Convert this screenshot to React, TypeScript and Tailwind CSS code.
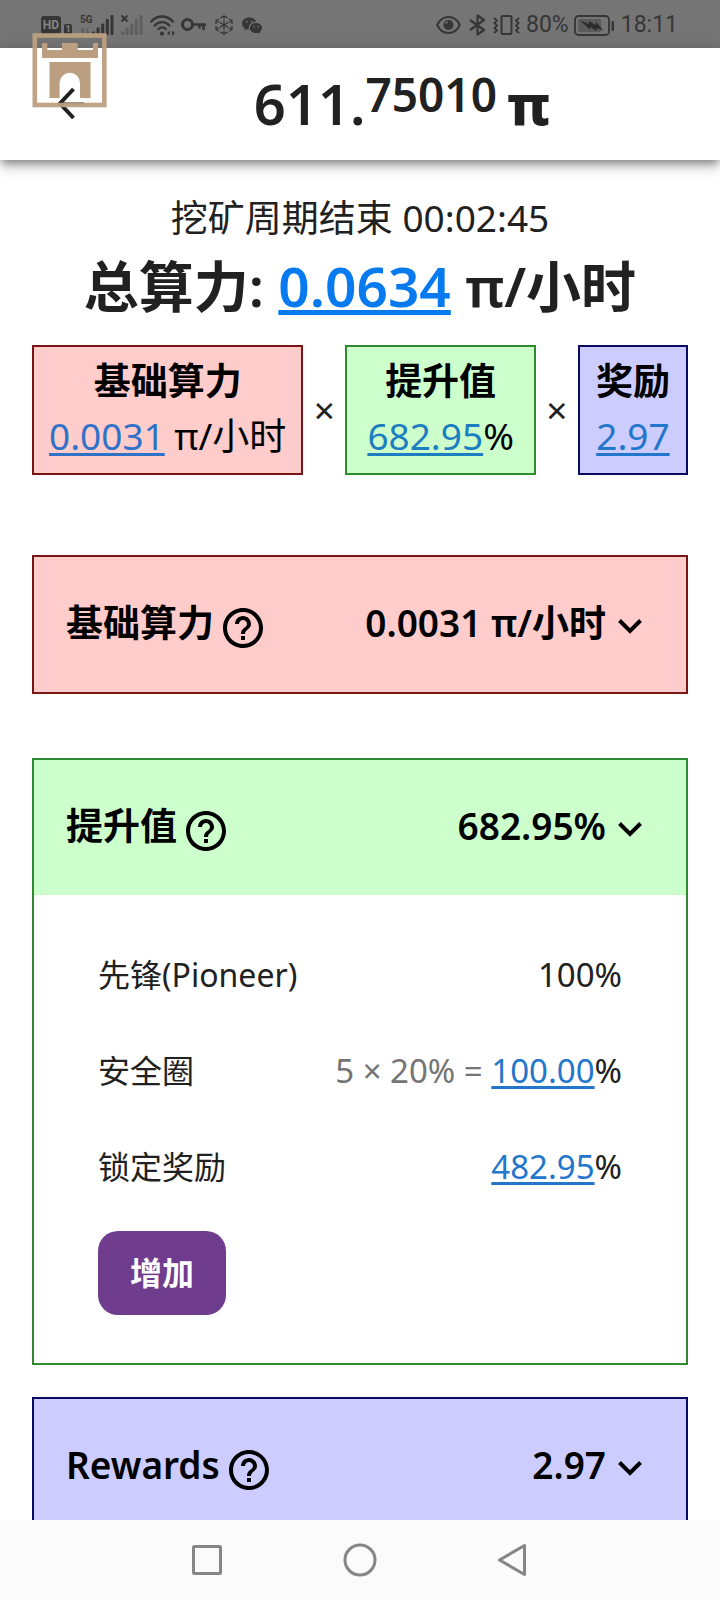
import { ReactNode, useState } from "react";
import { BsWechat } from "react-icons/bs";
import { MdHelpOutline } from "react-icons/md";

const ValueLink = ({ children, className = "text-[#2276cc] decoration-[3px]" }: { children: ReactNode; className?: string }) => (
  <a href="#detail" className={`underline underline-offset-[3px] ${className}`}>
    {children}
  </a>
);

const SignalBars = ({ className }: { className: string }) => (
  <svg className={className} viewBox="0 0 22 20" fill="currentColor" aria-hidden="true">
    <rect x="0" y="16.5" width="3" height="3.5" rx="1" />
    <rect x="4.6" y="12.5" width="3" height="7.5" rx="1" />
    <rect x="9.2" y="8.5" width="3" height="11.5" rx="1" />
    <rect x="13.8" y="4" width="3" height="16" rx="1" />
    <rect x="18.5" y="0" width="3" height="20" rx="1" />
  </svg>
);

const StatusBar = () => (
  <div className="flex h-12 shrink-0 items-center justify-between bg-[#757575] pt-0.5 pr-[42px] pl-[41px] font-['Roboto','Noto_Sans_CJK_SC',sans-serif] text-[#363636]">
    <div className="flex items-center">
      <span className="flex h-[18px] w-5 items-center justify-center rounded-[3px] bg-[#363636] text-[12px] font-bold text-[#858585]">
        HD
      </span>
      <span className="ml-[3px] flex h-3 w-2 items-center justify-center self-end rounded-[2px] bg-[#363636] text-[9px] font-bold text-[#858585]">
        1
      </span>
      <span className="ml-2 flex h-5 w-3 flex-col text-[10px] leading-[10px] font-bold">
        5G
        <svg className="mt-[3px] h-[7px] w-[10px] text-[#5c5c5c]" viewBox="0 0 10 7" stroke="currentColor" fill="none" aria-hidden="true">
          <path d="M1 3l2-2v6M9 4L7 6V0" strokeWidth="1.4" />
        </svg>
      </span>
      <SignalBars className="h-5 w-[22px]" />
      <span className="relative ml-[7px] block h-5 w-[22px]">
        <SignalBars className="h-5 w-[22px] text-[#5f5f5f]" />
        <svg className="absolute top-0 left-0 h-[7px] w-[7px]" viewBox="0 0 7 7" aria-hidden="true">
          <path d="M.5.5l6 6M6.5.5l-6 6" stroke="currentColor" strokeWidth="2" />
        </svg>
      </span>
      <svg className="ml-[7px] h-[21px] w-[25px]" viewBox="0 0 25 21" fill="none" stroke="currentColor" strokeWidth="2.4" strokeLinecap="round" aria-hidden="true">
        <path d="M1.3 6.5c6-6.7 15.500-6.7 21.500 0M4.8 10.5c4-4.5 10.500-4.5 14.500 0M8.5 14c2-2.2 5.200-2.200 7.200 0" />
        <circle cx="12" cy="18.6" r="2.1" fill="currentColor" stroke="none" />
        <path d="M17 18.500l3-3v5zM25 18l-3 3v-5.500z" fill="currentColor" stroke="none" />
      </svg>
      <svg className="ml-[6px] h-[14px] w-[26px]" viewBox="0 0 26 14" fill="none" stroke="currentColor" strokeWidth="3" aria-hidden="true">
        <circle cx="6.5" cy="6.5" r="5" />
        <path d="M11.5 6.5H25M22.5 6.5V12M18.5 6.5v4" strokeWidth="2.6" />
      </svg>
      <svg className="ml-[8px] h-5 w-[18px]" viewBox="0 0 18 20" fill="none" stroke="currentColor" strokeWidth="1.3" aria-hidden="true">
        <path d="M9 5v10M4.700 7.500l8.600 5M13.300 7.500l-8.600 5" />
        <path d="M5.500 2.800L9 1l3.500 1.800M9 1v3M5.500 17.200L9 19l3.500-1.800M9 19v-3M1 9V5.500L4 3.700M1 5.500l3 1.700M17 9V5.500l-3-1.800M17 5.500l-3 1.700M1 11v3.500l3 1.800M1 14.500l3-1.700M17 11v3.500l-3 1.800M17 14.500l-3-1.700" />
      </svg>
      <BsWechat className="ml-[9px] h-5 w-5" />
    </div>
    <div className="flex items-center text-[23px]">
      <svg className="h-5 w-[25px]" viewBox="0 0 25 20" fill="none" stroke="currentColor" strokeWidth="2" aria-hidden="true">
        <path d="M1.2 10C3.5 5 7.5 2 12.5 2s9 3 11.300 8c-2.300 5-6.300 8-11.300 8s-9-3-11.300-8z" />
        <circle cx="12.5" cy="10" r="5" fill="currentColor" stroke="none" />
        <path d="M9.5 8.8a3 3 0 0 1 2.500-2" stroke="#757575" strokeWidth="1.2" />
      </svg>
      <svg className="ml-2 h-[22px] w-[17px]" viewBox="0 0 17 22" fill="none" stroke="currentColor" strokeWidth="2.2" aria-hidden="true">
        <path d="M1 6l14 10-6.500 4.500v-19L15 6 1 16" strokeLinejoin="round" />
      </svg>
      <svg className="ml-[7px] h-5 w-[27px]" viewBox="0 0 27 20" fill="none" stroke="currentColor" strokeWidth="2" aria-hidden="true">
        <rect x="8.5" y="1" width="10" height="18" rx="1.5" />
        <path d="M1 3l3 2.500L1.500 8 4 10.500 1.500 13 4 15.500 1 18M26 3l-3 2.500L25.500 8 23 10.500l2.500 2.500-2.500 2.500 3 2.500" strokeWidth="1.8" />
      </svg>
      <span className="ml-[6px]">80%</span>
      <svg className="ml-[5px] h-[21px] w-[41px]" viewBox="0 0 41 21" fill="none" aria-hidden="true">
        <rect x="1" y="1" width="34" height="19" rx="3.5" stroke="currentColor" strokeWidth="1.8" />
        <rect x="4" y="4" width="23" height="13" rx="1.5" fill="#5b5b5b" />
        <path d="M6 5.500l9 3.500V6l6.500 4 .5-3 7.500 8.500-6.500-2.500-.5 3-6-4-.5 2.500z" fill="#2c2c2c" />
        <rect x="37.5" y="6" width="2.5" height="10" rx="1" fill="currentColor" />
      </svg>
      <span className="ml-[6px]">18:11</span>
    </div>
  </div>
);

const FloatingGate = () => (
  <svg className="absolute top-[33px] left-8 z-20 h-[75px] w-[75px]" viewBox="0 0 75 75" fill="#bc9f80" aria-hidden="true">
    <rect x="2.8" y="2.5" width="69.5" height="69.5" fill="none" stroke="#bc9f80" strokeWidth="4.6" strokeOpacity=".95" />
    <path d="M10 10h5.300v7H30v-7h15.700v7H61v-7h5v15H10z" />
    <path d="M17.500 29h41v36H48V50a10.200 10.200 0 0 0-20.400 0v15H17.500z" />
  </svg>
);

const Header = () => (
  <header className="relative z-10 flex h-28 shrink-0 items-center bg-white pl-9 shadow-[0_4px_8px_-2px_rgba(0,0,0,0.4),0_8px_10px_0_rgba(0,0,0,0.14),0_2px_20px_0_rgba(0,0,0,0.12)]">
    <button type="button" aria-label="返回" className="h-12 w-12">
      <svg className="h-12 w-12" viewBox="0 0 48 48" fill="none" stroke="currentColor" aria-hidden="true">
        <path d="M37.5 9L24 23.500 37.500 38" strokeWidth="4" />
        <path d="M24 23.500h24" strokeWidth="2" />
      </svg>
    </button>
    <h1 className="flex flex-1 items-baseline justify-center pb-0.5 text-[56px] leading-[72px] font-semibold">
      611.
      <sup className="-top-[13px] text-[46px] leading-none">75010</sup>
      <span className="ml-2.5 font-extrabold">π</span>
    </h1>
  </header>
);

interface FactorBoxProps {
  title: string;
  className: string;
  children: ReactNode;
}

const FactorBox = ({ title, className, children }: FactorBoxProps) => (
  <div className={`border-2 pt-1.5 pb-2.5 text-center text-[37px] leading-[55px] whitespace-nowrap text-black ${className}`}>
    <h3 className="font-semibold">{title}</h3>
    <p>{children}</p>
  </div>
);

interface RateCardProps {
  title: string;
  value: string;
  borderClass: string;
  headClass: string;
  children?: ReactNode;
}

const RateCard = ({ title, value, borderClass, headClass, children }: RateCardProps) => {
  const [open, setOpen] = useState(true);

  return (
    <section className={`border-2 ${borderClass}`}>
      <div className={`flex justify-between px-8 pt-9 pb-10 text-[37px] leading-[59px] font-semibold text-black ${headClass}`}>
        <div className="flex gap-[5px]">
          <h3>{title}</h3>
          <button type="button" aria-label={`${title} 说明`} className="self-end">
            <MdHelpOutline className="h-12 w-12" />
          </button>
        </div>
        <button type="button" aria-expanded={open} onClick={() => setOpen(!open)} className="flex items-center">
          {value}
          <svg className="h-12 w-12" viewBox="0 0 48 48" fill="none" stroke="currentColor" strokeWidth="4" aria-hidden="true">
            <path d="M13.5 21.500L24 32 34.500 21.500" />
          </svg>
        </button>
      </div>
      {open && children}
    </section>
  );
};

const DetailRow = ({ label, children }: { label: string; children: ReactNode }) => (
  <div className="flex justify-between py-6 text-[32px] leading-[48px]">
    <dt>{label}</dt>
    <dd className="text-[33px]">{children}</dd>
  </div>
);

const NavBar = () => (
  <nav className="flex h-20 shrink-0 items-center justify-center gap-[121px] bg-[#fbfbfb] text-[#868686]">
    <button type="button" aria-label="最近任务">
      <svg className="h-[30px] w-[30px]" viewBox="0 0 30 30" fill="none" stroke="currentColor" strokeWidth="3" aria-hidden="true">
        <rect x="1.5" y="1.5" width="27" height="27" rx="1" />
      </svg>
    </button>
    <button type="button" aria-label="主屏幕">
      <svg className="h-[34px] w-[34px]" viewBox="0 0 34 34" fill="none" stroke="currentColor" strokeWidth="3" aria-hidden="true">
        <circle cx="17" cy="17" r="15" />
      </svg>
    </button>
    <button type="button" aria-label="返回上一页">
      <svg className="h-[34px] w-[30px]" viewBox="0 0 30 34" fill="none" stroke="currentColor" strokeWidth="3" strokeLinejoin="round" aria-hidden="true">
        <path d="M26.500 2.500v29L1.500 17z" />
      </svg>
    </button>
  </nav>
);

const App = () => {
  return (
    <div className="relative flex h-screen flex-col overflow-hidden bg-white font-['Noto_Sans','Noto_Sans_CJK_SC',sans-serif] text-[#212121]">
      <StatusBar />
      <FloatingGate />
      <Header />

      <main className="min-h-0 flex-1 overflow-hidden px-8 pt-[34px]">
        <p className="text-center text-[37px] leading-[48px]">挖矿周期结束 00:02:45</p>
        <h2 className="mt-2 text-center text-[55px] leading-[72px] font-semibold">
          总算力: <ValueLink className="text-[#087af0] decoration-[5px]">0.0634</ValueLink> π/小时
        </h2>

        <div className="mt-[23px] flex items-center justify-between text-[37px]">
          <FactorBox title="基础算力" className="border-[#7a1515] bg-[#ffcccc] px-[15px]">
            <ValueLink className="text-[#2f72c8] decoration-[3px]">0.0031</ValueLink> π/小时
          </FactorBox>
          <span>×</span>
          <FactorBox title="提升值" className="border-[#2e8b2e] bg-[#ccffcc] px-5">
            <ValueLink className="text-[#1c7dc0] decoration-[3px]">682.95</ValueLink>%
          </FactorBox>
          <span>×</span>
          <FactorBox title="奖励" className="border-[#0a0a60] bg-[#ccccff] px-4">
            <ValueLink>2.97</ValueLink>
          </FactorBox>
        </div>

        <div className="mt-20">
          <RateCard title="基础算力" value="0.0031 π/小时" borderClass="border-[#7a1515]" headClass="bg-[#ffcccc]" />
        </div>

        <div className="mt-16">
          <RateCard title="提升值" value="682.95%" borderClass="border-[#2e8b2e]" headClass="bg-[#ccffcc]">
            <div className="px-16 pt-8 pb-12">
              <dl>
                <DetailRow label="先锋(Pioneer)">100%</DetailRow>
                <DetailRow label="安全圈">
                  <span className="text-[#757575]">5 × 20% = </span>
                  <ValueLink>100.00</ValueLink>%
                </DetailRow>
                <DetailRow label="锁定奖励">
                  <ValueLink>482.95</ValueLink>%
                </DetailRow>
              </dl>
              <button type="button" className="mt-4 rounded-[20px] bg-[#6f3c8e] px-8 py-[18px] text-[32px] leading-[48px] font-bold text-white">
                增加
              </button>
            </div>
          </RateCard>
        </div>

        <div className="mt-8">
          <RateCard title="Rewards" value="2.97" borderClass="border-[#0a0a60]" headClass="bg-[#ccccff]" />
        </div>
      </main>

      <NavBar />
    </div>
  );
};

export default App;
